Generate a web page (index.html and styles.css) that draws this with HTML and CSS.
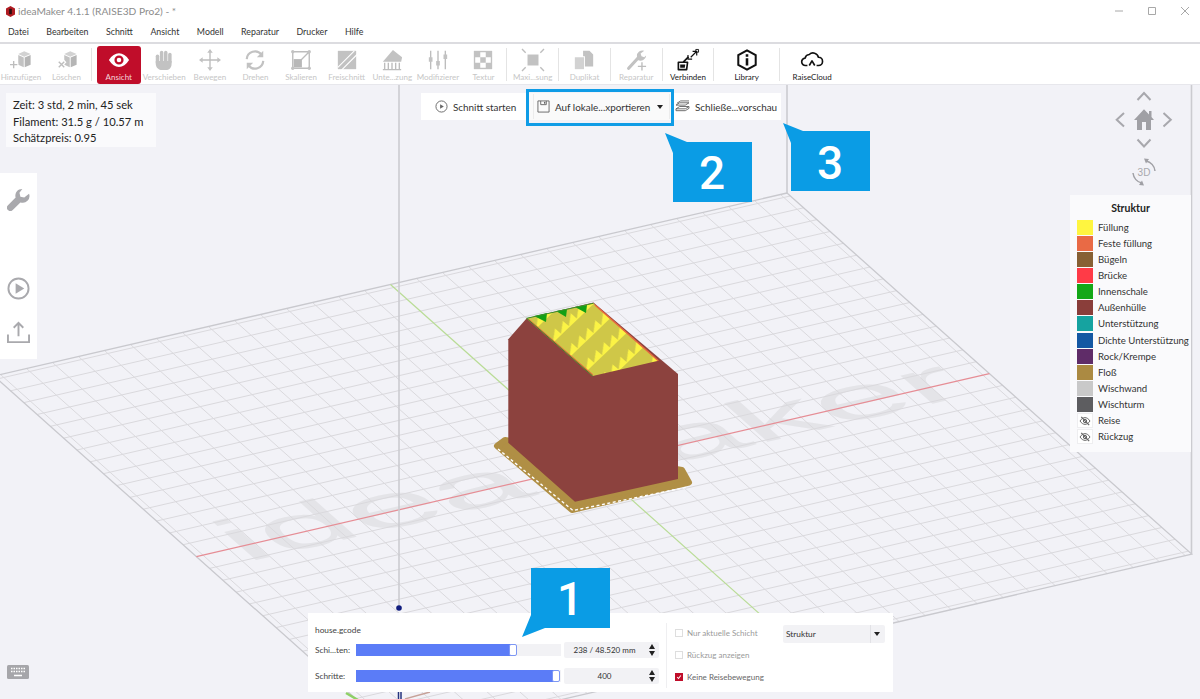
FILE: index.html
```html
<!DOCTYPE html>
<html lang="de">
<head>
<meta charset="utf-8">
<title>ideaMaker 4.1.1</title>
<link rel="stylesheet" href="styles.css">
</head>
<body>
<div class="app">
  <header class="titlebar">
    <svg class="logo" viewBox="0 0 10 12"><path class="logo-hex" d="M5 0l5 2.800v6.400L5 12 0 9.200V2.800z"/><path class="logo-core" d="M3.500 3h3v6h-3z"/></svg>
    <span class="title-text">ideaMaker 4.1.1 (RAISE3D Pro2) - *</span>
    <div class="win-controls">
      <svg class="win-icon" viewBox="0 0 10 10"><path d="M1 5h8"/></svg>
      <svg class="win-icon" viewBox="0 0 10 10"><path d="M1.500 1.500h7v7h-7z"/></svg>
      <svg class="win-icon" viewBox="0 0 10 10"><path d="M1 1l8 8M9 1l-8 8"/></svg>
    </div>
  </header>

  <nav class="menubar">
    <span>Datei</span><span>Bearbeiten</span><span>Schnitt</span><span>Ansicht</span><span>Modell</span><span>Reparatur</span><span>Drucker</span><span>Hilfe</span>
  </nav>

  <div class="toolbar">
    <div class="tool tool-first">
      <svg class="ticon" viewBox="0 0 24 24"><path class="g2" d="M9 5.500l6.500-3 7 3-7 3z"/><path class="g1" d="M9 6.500l6 2.800v10.700l-6-2.800z"/><path class="g3" d="M16 9.300l6.500-2.800v10.700L16 20z"/><path class="wline" d="M-1 17h10M4 12v10"/><path class="gline" d="M0 17h8M4 13v8"/></svg>
      <span>Hinzufügen</span>
    </div>
    <div class="tool tool-second">
      <svg class="ticon" viewBox="0 0 24 24"><path class="g2" d="M9 5.500l6.500-3 7 3-7 3z"/><path class="g1" d="M9 6.500l6 2.800v10.700l-6-2.800z"/><path class="g3" d="M16 9.300l6.500-2.800v10.700L16 20z"/><path class="wline" d="M2 13l8 8M10 13l-8 8"/><path class="gline" d="M3 14l6 6M9 14l-6 6"/></svg>
      <span>Löschen</span>
    </div>
    <i class="sep"></i>
    <div class="tool tool-active">
      <svg class="ticon" viewBox="0 0 24 24"><path class="white" fill-rule="evenodd" d="M1 12c3-5 7-7.500 11-7.500S20 7 23 12c-3 5-7 7.500-11 7.500S4 17 1 12zm11-5a5 5 0 1 0 0 10 5 5 0 0 0 0-10zm0 2.500a2.500 2.500 0 1 1 0 5 2.500 2.500 0 0 1 0-5z"/></svg>
      <span>Ansicht</span>
    </div>
    <div class="tool">
      <svg class="ticon" viewBox="0 0 24 24"><rect class="g1" x="3" y="6" width="3.800" height="11" rx="1.900"/><rect class="g1" x="7.500" y="2" width="3.800" height="13" rx="1.900"/><rect class="g1" x="12" y="2" width="3.800" height="13" rx="1.900"/><rect class="g1" x="16.500" y="4" width="3.800" height="12" rx="1.900"/><path class="g1" d="M3 13H20.300V16C20.300 20.500 17.500 23 14 23H10C6 23 3 20 3 16z"/></svg>
      <span>Verschieben</span>
    </div>
    <div class="tool">
      <svg class="ticon" viewBox="0 0 24 24"><path class="gline" d="M12 3v18M2 12h20"/><path class="g1" d="M12 0l3 4H9zM12 24l-3-4h6zM0 12l4-3v6zM24 12l-4 3V9z"/></svg>
      <span>Bewegen</span>
    </div>
    <div class="tool">
      <svg class="ticon" viewBox="0 0 24 24"><path class="gthick" d="M3 11a9 9 0 0 1 16-5M21 13a9 9 0 0 1-16 5"/><path class="g1" d="M21 2v7h-7zM3 22v-7h7z"/></svg>
      <span>Drehen</span>
    </div>
    <div class="tool">
      <svg class="ticon" viewBox="0 0 24 24"><path class="gline" d="M3 3h18v18H3zM12 12l9-9"/><path class="g2b" d="M4 11h9v9H4z"/><circle class="g1" cx="3" cy="3" r="1.800"/><circle class="g1" cx="21" cy="3" r="1.800"/><circle class="g1" cx="3" cy="21" r="1.800"/><circle class="g1" cx="21" cy="21" r="1.800"/></svg>
      <span>Skalieren</span>
    </div>
    <div class="tool">
      <svg class="ticon" viewBox="0 0 24 24"><path class="g1" d="M2 2h20v20H2z"/><path class="wthin" d="M2 20L20 2M6 23L23 6"/></svg>
      <span>Freischnitt</span>
    </div>
    <div class="tool">
      <svg class="ticon" viewBox="0 0 24 24"><path class="g1" d="M2 14L13 1l10 8-1 5z"/><path class="gline" d="M4 15v7M8 15v7M12 15v7M16 15v7M20 15v7M2 22.500h20"/></svg>
      <span>Unte...zung</span>
    </div>
    <div class="tool">
      <svg class="ticon" viewBox="0 0 24 24"><path class="gline" d="M4 2v20M12 2v20M20 2v20"/><path class="gfat" d="M4 9v5M12 13v5M20 6v5"/></svg>
      <span>Modifizierer</span>
    </div>
    <div class="tool">
      <svg class="ticon" viewBox="0 0 24 24"><path class="g1" d="M2 2h20v20H2z"/><path class="white" d="M9 3.500h6V9H9zM3.500 9H9v6H3.500zM15 9h5.500v6H15zM9 15h6v5.500H9z"/></svg>
      <span>Textur</span>
    </div>
    <i class="sep"></i>
    <div class="tool tool-w51">
      <svg class="ticon" viewBox="0 0 24 24"><path class="g1" d="M6 6h12v12H6z"/><path class="gline" d="M0 0l4 4M24 0l-4 4M0 24l4-4M24 24l-4-4"/></svg>
      <span>Maxi...sung</span>
    </div>
    <i class="sep"></i>
    <div class="tool tool-w51">
      <svg class="ticon" viewBox="0 0 24 24"><path class="g2" d="M2 9h10v13H2z"/><path class="g1" d="M11 2h7l4 4v13H13V8h-2z"/></svg>
      <span>Duplikat</span>
    </div>
    <i class="sep"></i>
    <div class="tool tool-w51">
      <svg class="ticon" viewBox="0 0 24 24"><path class="gfat2" d="M4 21L15 9"/><path class="g1" d="M13 8a6 6 0 0 1 8-6l-4 3 1 3 3 1 2-2a6 6 0 0 1-9 5z"/><path class="gline" d="M14 19h9M18.500 14.500v9"/></svg>
      <span>Reparatur</span>
    </div>
    <i class="sep"></i>
    <div class="tool tool-w51 tool-on">
      <svg class="ticon" viewBox="0 0 24 24"><path class="bline" d="M1.500 14.500h10l-1 8h-9zM6.500 14.500l6-6"/><path class="bfill" d="M3.500 17h5.500l-.5 3.500h-5z"/><path class="bline2" d="M15 9l6-6M17 2.500h4.500V7M12 6.500V11h4.500"/><path class="bthin" d="M20.500 .5h3v3h-3z"/></svg>
      <span>Verbinden</span>
    </div>
    <i class="sep"></i>
    <div class="tool tool-w65 tool-on">
      <svg class="ticon" viewBox="0 0 24 24"><path class="bhex" d="M12 1.500l9.500 5.250v10.500L12 22.500l-9.500-5.250V6.750z"/><path class="bfill" d="M10.600 10h2.800v8h-2.800zM10.600 5.800h2.800v2.600h-2.800z"/></svg>
      <span>Library</span>
    </div>
    <i class="sep"></i>
    <div class="tool tool-w65 tool-on">
      <svg class="ticon" viewBox="0 0 24 24"><path class="bline" d="M7 18H5a4 4 0 0 1-.5-8A5 5 0 0 1 9 6a6 6 0 0 1 10 3 4.500 4.500 0 0 1 0 9h-2"/><path class="bline" d="M9 18l3-5 3 5"/></svg>
      <span>RaiseCloud</span>
    </div>
  </div>

  <main class="viewport">
    <svg class="scene" viewBox="0 85 1200 614">
      <text class="watermark" transform="matrix(2.6 -0.6 1.000 .888 245.400 562.400)" font-size="60">ideaMaker</text>
      <g transform="matrix(-2.6 0.6 1.327 1.184 787 193)">
        <path class="grid" vector-effect="non-scaling-stroke" d="M2.500 0V305M12.500 0V305M22.500 0V305M32.500 0V305M42.500 0V305M52.500 0V305M62.500 0V305M72.500 0V305M82.500 0V305M92.500 0V305M102.500 0V305M112.500 0V305M122.500 0V305M132.500 0V305M142.500 0V305M162.500 0V305M172.500 0V305M182.500 0V305M192.500 0V305M202.500 0V305M212.500 0V305M222.500 0V305M232.500 0V305M242.500 0V305M252.500 0V305M262.500 0V305M272.500 0V305M282.500 0V305M292.500 0V305M302.500 0V305"/>
        <path class="grid" vector-effect="non-scaling-stroke" d="M0 2.500H305M0 12.500H305M0 22.500H305M0 32.500H305M0 42.500H305M0 52.500H305M0 62.500H305M0 72.500H305M0 82.500H305M0 92.500H305M0 102.500H305M0 112.500H305M0 122.500H305M0 132.500H305M0 142.500H305M0 162.500H305M0 172.500H305M0 182.500H305M0 192.500H305M0 202.500H305M0 212.500H305M0 222.500H305M0 232.500H305M0 242.500H305M0 252.500H305M0 262.500H305M0 272.500H305M0 282.500H305M0 292.500H305M0 302.500H305"/>
        <path class="bed-edge" vector-effect="non-scaling-stroke" d="M0 0H305V305H0z"/>
        <path class="axis-x" vector-effect="non-scaling-stroke" d="M0 152.500H305"/>
        <path class="axis-y" vector-effect="non-scaling-stroke" d="M152.500 0V305"/>
      </g>
      <path class="frame" d="M399 85V606M787 85V193M1191.500 85V554"/>
      <circle class="axis-dot" cx="399" cy="608" r="2.800"/>
      <path class="foot-green" d="M346 693l12 7"/>
      <path class="foot-blue" d="M398.500 692v8M401 692v8"/>
      <path class="foot-red" d="M405 699l25-7"/>

      <path class="raft" d="M497 446L505 440 682 470 689 482.500 572 510z"/>
      <path class="raft-dash" d="M498 449L573 510.500 688 487"/>

      <path class="wall" d="M526.700 318.300L593.500 302.500 678 374V479L575 501.700 508.300 442.700V339.300z"/>
      <defs>
        <pattern id="infill" patternUnits="userSpaceOnUse" width="11" height="22" patternTransform="matrix(.72 -.69 .753 .658 526.700 318.300)">
          <rect class="infill-base" width="11" height="22"/>
          <path class="infill-tooth" d="M0 13L11 5V14H0z"/>
        </pattern>
      </defs>
      <path class="roof" d="M526.700 318.300L593.300 303.300 658.300 360.700 592.700 376z"/>
      <path class="roof-green" d="M534 316L547 313 546 322zM556 311L567 309 566 317zM575 307L587 305 586 313z"/>
      <path class="roof-top" d="M526.700 318.300L593.300 303.300"/>
      <path class="roof-orange" d="M528.500 319.500L592.700 375M595 305L658.300 360.700"/>
      <path class="roof-green-line" d="M526.700 318.300L592.700 376"/>
    </svg>

    <section class="info-panel">
      <div>Zeit: 3 std, 2 min, 45 sek</div>
      <div>Filament: 31.5 g / 10.57 m</div>
      <div>Schätzpreis: 0.95</div>
    </section>

    <section class="actions">
      <div class="action action-start">
        <svg class="aicon" viewBox="0 0 14 14"><circle cx="7" cy="7" r="6" class="aline"/><path class="afill" d="M5.500 4.500L9.500 7l-4 2.500z"/></svg>
        <span>Schnitt starten</span>
      </div>
      <div class="action action-export">
        <svg class="aicon" viewBox="0 0 14 14"><path class="aline" d="M1 1h12v12H1zM4 1v4h6V1"/><path class="afill" d="M7.500 2h1.500v2H7.500z"/></svg>
        <span>Auf lokale...xportieren</span>
        <i class="caret"></i>
      </div>
      <div class="action action-close">
        <svg class="aicon aicon-wide" viewBox="0 0 16 14"><path class="aline" d="M1 9.500L5 7h10l-4 2.500zM1 9.500v2h10l4-2.500V7M1 5.500L5 3h10l-4 2.500zM2 3.500L6 1h9"/></svg>
        <span>Schließe...vorschau</span>
      </div>
    </section>
    <div class="highlight"></div>

    <aside class="side-tools">
      <svg class="side-icon" viewBox="0 0 24 24"><path class="side-fill" d="M16 1a7 7 0 0 0-7 9L1 18a3 3 0 0 0 5 5l8-8a7 7 0 0 0 9-9l-5 4-4-1-1-4z"/></svg>
      <div class="side-spacer"></div>
      <svg class="side-icon" viewBox="0 0 24 24"><circle class="side-line" cx="12" cy="12" r="10.500"/><path class="side-fill" d="M9 6.500L18 12l-9 5.500z"/></svg>
      <svg class="side-icon side-icon-last" viewBox="0 0 24 24"><path class="side-line" d="M12 16V2M7 7l5-5 5 5M1 14v8h22v-8"/></svg>
    </aside>

    <div class="nav-cube">
      <svg viewBox="0 0 60 100" class="nav-svg">
        <path class="nav-line" d="M23.500 12l6.500-7 6.500 7M10 25l-7.300 6.800 7.300 6.800M49.500 25l7.300 6.800-7.300 6.800M23.500 51.500l6.500 7 6.500-7"/>
        <path class="nav-fill" d="M30 21.300L35 26.500V23h2.500v6L40 32h-3v10h-5v-8h-4v8h-5V32h-3z"/>
        <path class="nav-thin" d="M32 73a11.500 11.500 0 0 1 9 10M28 95a11.500 11.500 0 0 1-9-10"/>
        <path class="nav-fill" d="M30 70.500l5 .5-3 4.500zM30 97.500l-5-.5 3-4.500z"/>
        <text class="nav-3d" x="30" y="88" text-anchor="middle">3D</text>
      </svg>
    </div>

    <aside class="legend">
      <h2>Struktur</h2>
      <ul>
        <li><i class="sw sw-fill"></i>Füllung</li>
        <li><i class="sw sw-solid"></i>Feste füllung</li>
        <li><i class="sw sw-iron"></i>Bügeln</li>
        <li><i class="sw sw-bridge"></i>Brücke</li>
        <li><i class="sw sw-inner"></i>Innenschale</li>
        <li><i class="sw sw-outer"></i>Außenhülle</li>
        <li><i class="sw sw-support"></i>Unterstützung</li>
        <li><i class="sw sw-dense"></i>Dichte Unterstützung</li>
        <li><i class="sw sw-brim"></i>Rock/Krempe</li>
        <li><i class="sw sw-raft"></i>Floß</li>
        <li><i class="sw sw-wall"></i>Wischwand</li>
        <li><i class="sw sw-tower"></i>Wischturm</li>
        <li><i class="sw sw-eye"><svg viewBox="0 0 14 12"><path class="eye" d="M1 6c2-3 4-4 6-4s4 1 6 4c-2 3-4 4-6 4s-4-1-6-4z"/><circle class="eye" cx="7" cy="6" r="2"/><path class="eye-strike" d="M2.500 1l9.500 10"/></svg></i>Reise</li>
        <li><i class="sw sw-eye"><svg viewBox="0 0 14 12"><path class="eye" d="M1 6c2-3 4-4 6-4s4 1 6 4c-2 3-4 4-6 4s-4-1-6-4z"/><circle class="eye" cx="7" cy="6" r="2"/><path class="eye-strike" d="M2.500 1l9.500 10"/></svg></i>Rückzug</li>
      </ul>
    </aside>

    <section class="slice-panel">
      <div class="slice-left">
        <div class="file-name">house.gcode</div>
        <div class="slider-row slider-row-first">
          <label>Schi...ten:</label>
          <div class="track"><div class="fill fill-layers"></div><b class="thumb"></b></div>
          <div class="spin"><span>238 / 48.520 mm</span><i class="spin-arrows"></i></div>
        </div>
        <div class="slider-row">
          <label>Schritte:</label>
          <div class="track"><div class="fill fill-steps"></div><b class="thumb"></b></div>
          <div class="spin"><span>400</span><i class="spin-arrows"></i></div>
        </div>
      </div>
      <div class="slice-right">
        <div class="checks">
          <div class="check"><i class="box"></i>Nur aktuelle Schicht</div>
          <div class="check"><i class="box"></i>Rückzug anzeigen</div>
          <div class="check check-on"><i class="box box-on"><svg viewBox="0 0 10 10"><path d="M2 5l2.200 2.500L8 2.500"/></svg></i>Keine Reisebewegung</div>
        </div>
        <div class="select"><span>Struktur</span><i class="select-btn"></i></div>
      </div>
    </section>

    <svg class="kbd" viewBox="0 0 22 14"><rect class="kbd-body" width="22" height="14" rx="1.500"/><path class="kbd-keys" d="M4 3.500h14M4 6.500h14" /><path class="kbd-bar" d="M7 10.500h8"/></svg>

    <svg class="callouts" viewBox="0 85 1200 614">
      <path class="callout" d="M531 568H610V628H545L522 637 531 615z"/>
      <text class="callout-num" x="570" y="615">1</text>
      <path class="callout" d="M665 133L687 142H752V202H673V153z"/>
      <text class="callout-num" x="712" y="189">2</text>
      <path class="callout" d="M783 123L803 131H870V191H791V143z"/>
      <text class="callout-num" x="830" y="179">3</text>
    </svg>
  </main>
</div>
</body>
</html>
```
FILE: styles.css
```css
* { box-sizing: border-box; }
html, body { margin: 0; height: 100%; overflow: hidden; }
body { font-family: "Lato", "Noto Sans", sans-serif; color: #222; background: #fff; }
.app { display: flex; flex-direction: column; height: 699px; width: 1200px; }

/* title bar */
.titlebar { height: 22px; display: flex; align-items: center; padding: 0 0 0 6px; background: #fff; flex: none; }
.logo { width: 9px; height: 11px; margin-right: 3px; }
.logo-hex { fill: #b01c22; }
.logo-core { fill: #2a0f10; }
.title-text { font-size: 10.200px; color: #8c8c8c; }
.win-controls { margin-left: auto; display: flex; gap: 23px; padding-right: 10px; }
.win-icon { width: 10px; height: 10px; fill: none; stroke: #a8a8a8; stroke-width: 1; }

/* menu */
.menubar { height: 22px; flex: none; display: flex; gap: 17.500px; align-items: center; padding: 0 0 1px 8px; font-size: 8.800px; color: #333; border-bottom: 2px solid #dcdce0; }

/* toolbar */
.toolbar { height: 41px; flex: none; display: flex; align-items: stretch; background: #fff; border-bottom: 1px solid #e7e7ec; }
.tool { width: 45.600px; flex: none; display: flex; flex-direction: column; align-items: center; padding-top: 5px; font-size: 8px; line-height: 10px; color: #c6c6c6; white-space: nowrap; }
.tool span { margin-top: 1px; }
.tool-first { width: 42px; }
.tool-second { width: 49px; }
.tool-active { background: #c00d2a; color: #f4d5da; border-radius: 3px; height: 38px; margin: 2px 1px 0 5px; width: 43.500px; padding-top: 3px; }
.tool-w51 { width: 50.800px; }
.tool-w65 { width: 64.500px; }
.tool-on { color: #222; }
.ticon { width: 22px; height: 22px; display: block; overflow: visible; fill: none; }
.sep { width: 1px; flex: none; background: #e4e4e4; margin: 4px 0 3px; }
.g1 { fill: #c2c2c2; }
.g2 { fill: #d2d2d2; }
.g2b { fill: #b8b8b8; }
.g3 { fill: #b5b5b5; }
.gline { stroke: #bdbdbd; stroke-width: 1.500; fill: none; }
.gthick { stroke: #c2c2c2; stroke-width: 2.400; fill: none; }
.gfat { stroke: #c2c2c2; stroke-width: 4; fill: none; }
.gfat2 { stroke: #c2c2c2; stroke-width: 3.500; stroke-linecap: round; fill: none; }
.wline { stroke: #fff; stroke-width: 4; fill: none; }
.wthin { stroke: #fff; stroke-width: 1.200; fill: none; }
.white { fill: #fff; }
.bline { stroke: #111; stroke-width: 1.800; fill: none; stroke-linejoin: round; }
.bline2 { stroke: #111; stroke-width: 1.300; fill: none; }
.bthin { stroke: #111; stroke-width: 1; fill: none; }
.bhex { stroke: #111; stroke-width: 2.200; fill: none; }
.bfill { fill: #111; }

/* viewport */
.viewport { position: relative; flex: 1; background: #f2f2f7; overflow: hidden; }
.scene, .callouts { position: absolute; inset: 0; width: 1200px; height: 614px; }
.watermark { font-family: "Liberation Sans", sans-serif; fill: #e4e4e8; }
.grid { fill: none; stroke: #dad9dd; stroke-width: 1; }
.bed-edge { fill: none; stroke: #c9c9ce; stroke-width: 1.300; }
.axis-x { stroke: #e68d95; stroke-width: 1.200; fill: none; }
.axis-y { stroke: #b9dc96; stroke-width: 1.200; fill: none; }
.frame { stroke: #cbcbd0; stroke-width: 1.600; fill: none; }
.axis-dot { fill: #101c7e; }
.foot-green { stroke: #8ed065; stroke-width: 2.500; fill: none; }
.foot-blue { stroke: #26347f; stroke-width: 1.500; fill: none; }
.foot-red { stroke: #c7a299; stroke-width: 1.300; fill: none; }
.raft { fill: #b08f45; stroke: #b08f45; stroke-width: 6; stroke-linejoin: round; }
.raft-dash { stroke: #fff; stroke-width: 1.400; stroke-dasharray: 3 2.500; fill: none; }
.wall { fill: #8c423e; }
.roof { fill: url(#infill); }
.infill-base { fill: #cfc748; }
.infill-tooth { fill: #fbf345; }
.roof-green { fill: #12a015; }
.roof-top { stroke: #3d8f2b; stroke-width: 1; fill: none; }
.roof-orange { stroke: #e8693f; stroke-width: 1.500; fill: none; }
.roof-green-line { stroke: #3d8f2b; stroke-width: 1; fill: none; }

/* info panel */
.info-panel { position: absolute; left: 6px; top: 8px; width: 150px; height: 54px; padding: 4px 0 0 7px; background: #fafafc; font-size: 11.200px; line-height: 16.500px; color: #222; }

/* slice actions */
.actions { position: absolute; left: 421px; top: 8px; width: 360px; height: 27px; display: flex; background: #fff; font-size: 9.900px; color: #333; }
.action { display: flex; align-items: center; flex: none; height: 100%; }
.action-start { width: 105px; padding-left: 14px; }
.action-export { width: 147px; padding-left: 11px; position: relative; background: #fafafa; }
.action-export::before { content: ""; position: absolute; left: 7px; width: 135px; top: 1px; bottom: 1px; border-left: 1px solid #ececec; border-right: 1px solid #ececec; }
.action-close { width: 108px; padding-left: 2px; }
.aicon { width: 13px; height: 13px; margin-right: 5px; flex: none; }
.aicon-wide { width: 15px; }
.aline { fill: none; stroke: #666; stroke-width: 1; }
.afill { fill: #666; }
.caret { margin-left: 7px; width: 0; height: 0; border: 3.500px solid transparent; border-top: 4.500px solid #222; border-bottom: 0; }
.highlight { position: absolute; left: 526px; top: 4px; width: 148px; height: 37px; border: 3px solid #0f9ce6; }

/* side tools */
.side-tools { position: absolute; left: 0; top: 88px; width: 37px; height: 186px; background: #fff; display: flex; flex-direction: column; align-items: center; padding-top: 15px; }
.side-icon { width: 23px; height: 23px; flex: none; }
.side-spacer { height: 66px; flex: none; }
.side-icon-last { margin-top: 21px; }
.side-fill { fill: #a9a9ad; }
.side-line { fill: none; stroke: #a9a9ad; stroke-width: 2; }

/* navigation */
.nav-cube { position: absolute; left: 1114px; top: 3px; width: 60px; height: 100px; }
.nav-svg { width: 60px; height: 100px; display: block; overflow: visible; }
.nav-line { fill: none; stroke: #a8a8ad; stroke-width: 2; }
.nav-fill { fill: #a0a0a5; }
.nav-thin { fill: none; stroke: #a0a0a5; stroke-width: 1.500; }
.nav-3d { font-size: 10px; fill: #a8a8ad; font-family: "Liberation Sans", sans-serif; }

/* legend */
.legend { position: absolute; left: 1070px; top: 110px; width: 121px; height: 257px; background: #fafafc; padding: 7px 0 0 7px; font-size: 9.600px; color: #333; }
.legend h2 { margin: 0 0 5px; font-size: 10.500px; line-height: 12px; font-weight: 700; text-align: center; color: #222; padding-right: 7px; }
.legend ul { margin: 0; padding: 0; list-style: none; }
.legend li { display: flex; align-items: center; height: 16.150px; white-space: nowrap; }
.sw { width: 16px; height: 15px; margin-right: 5px; flex: none; display: flex; align-items: center; justify-content: center; }
.sw-fill { background: #fff540; }
.sw-solid { background: #e96a45; }
.sw-iron { background: #876034; }
.sw-bridge { background: #ff3b47; }
.sw-inner { background: #14a818; }
.sw-outer { background: #8a3e3a; }
.sw-support { background: #16a3a0; }
.sw-dense { background: #1458a3; }
.sw-brim { background: #5f2c68; }
.sw-raft { background: #ab8a42; }
.sw-wall { background: #c9c9c9; }
.sw-tower { background: #5d5d60; }
.sw-eye { background: #fff; border: 1px solid #eeeef0; }
.sw-eye svg { width: 12px; height: 10px; }
.eye { fill: none; stroke: #666; stroke-width: 1.200; }
.eye-strike { stroke: #666; stroke-width: 1.500; fill: none; }

/* slice panel */
.slice-panel { position: absolute; left: 308px; top: 528px; width: 585px; height: 79px; background: #fff; display: flex; font-size: 8.300px; color: #444; }
.slice-left { width: 359px; padding: 2px 0 0 7px; flex: none; border-right: 1px solid #efeff1; margin: 10px 0 4px; }
.file-name { line-height: 11px; }
.slider-row { display: flex; align-items: center; height: 16px; margin-top: 10px; }
.slider-row-first { margin-top: 6px; }
.slider-row label { width: 40.500px; flex: none; }
.track { position: relative; width: 205px; height: 12px; background: #f2f2f5; flex: none; }
.fill { height: 100%; background: #5b7cf7; }
.fill-layers { width: 157px; }
.fill-steps { width: 200px; }
.thumb { position: absolute; top: 0; width: 8px; height: 12px; background: #fff; border: 1px solid #7d97f4; border-radius: 2px; }
.fill-layers + .thumb { left: 153px; }
.fill-steps + .thumb { left: 196px; }
.spin { width: 95px; height: 100%; margin-left: 3px; background: #f2f2f5; border-radius: 2px; display: flex; align-items: center; position: relative; flex: none; }
.spin span { width: 82px; text-align: center; font-size: 8px; color: #333; }
.spin-arrows { position: absolute; right: 3px; top: 0; width: 7px; height: 16px; }
.spin-arrows::before, .spin-arrows::after { content: ""; position: absolute; left: 0; border: 3.500px solid transparent; }
.spin-arrows::before { top: 2px; border-bottom: 5px solid #222; border-top: 0; }
.spin-arrows::after { top: 9px; border-top: 5px solid #222; border-bottom: 0; }
.slice-right { flex: 1; display: flex; padding: 12px 0 0 8px; }
.checks { width: 108px; display: flex; flex-direction: column; gap: 13px; flex: none; padding-top: 3px; font-size: 8px; }
.check { display: flex; align-items: center; height: 9px; color: #9a9a9a; white-space: nowrap; }
.check-on { color: #666; }
.box { width: 8px; height: 8px; margin-right: 4px; border: 1px solid #dedede; flex: none; background: #fff; }
.box-on { background: #c00d2a; border-color: #c00d2a; }
.box-on svg { display: block; width: 6px; height: 6px; fill: none; stroke: #fff; stroke-width: 1.800; }
.select { width: 102px; height: 18px; background: #f2f2f5; border-radius: 2px; display: flex; align-items: center; justify-content: space-between; color: #333; flex: none; padding-left: 3px; }
.select-btn { width: 15px; height: 100%; border-left: 1px solid #e2e2e6; position: relative; }
.select-btn::after { content: ""; position: absolute; left: 3px; top: 7px; border: 3.500px solid transparent; border-top: 4px solid #222; border-bottom: 0; }

/* keyboard */
.kbd { position: absolute; left: 7px; top: 580px; width: 22px; height: 14px; }
.kbd-body { fill: #a6a6aa; }
.kbd-keys { stroke: #fff; stroke-width: 1.500; stroke-dasharray: 1.500 1; fill: none; }
.kbd-bar { stroke: #fff; stroke-width: 1.500; fill: none; }

/* callouts */
.callouts { pointer-events: none; }
.callout { fill: #0a9ce5; }
.callout-num { font-family: "Roboto", sans-serif; font-weight: 500; font-size: 46px; fill: #fff; text-anchor: middle; }
```
